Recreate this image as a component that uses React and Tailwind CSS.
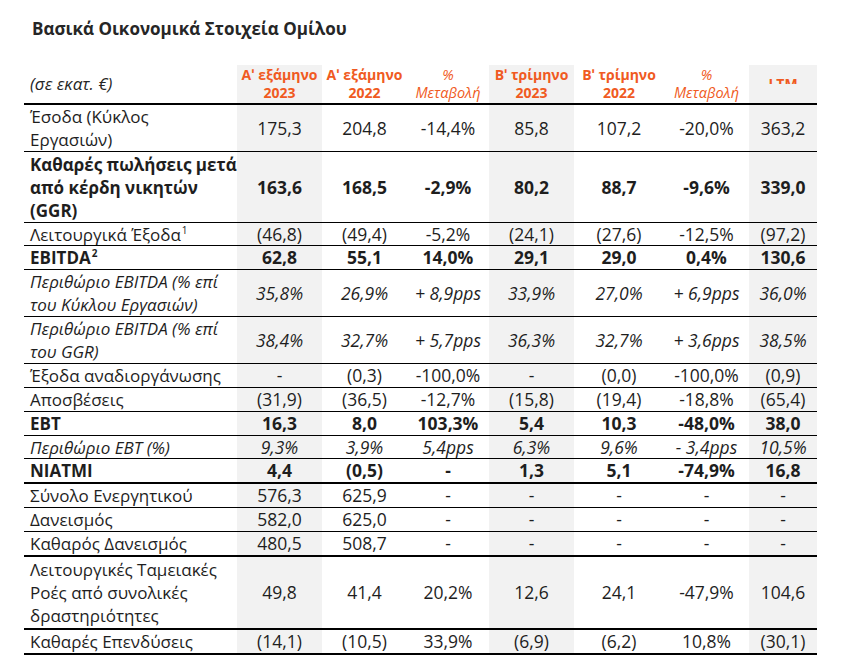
import React from 'react';

const cols = 'grid grid-cols-[213px_85px_85px_82px_85px_90px_85px_68px]';
const shaded = [1, 4, 7];

// h = row height in px, border included
const rows = [
  { h: 'h-[47px]', label: ['Έσοδα (Κύκλος', 'Εργασιών)'], vals: ['175,3', '204,8', '-14,4%', '85,8', '107,2', '-20,0%', '363,2'] },
  { h: 'h-[71px]', label: ['Καθαρές πωλήσεις μετά', 'από κέρδη νικητών', '(GGR)'], bold: true, vals: ['163,6', '168,5', '-2,9%', '80,2', '88,7', '-9,6%', '339,0'] },
  { h: 'h-[23px]', label: ['Λειτουργικά Έξοδα'], sup: '1', vals: ['(46,8)', '(49,4)', '-5,2%', '(24,1)', '(27,6)', '-12,5%', '(97,2)'] },
  { h: 'h-[24px]', label: ['EBITDA'], sup: '2', bold: true, vals: ['62,8', '55,1', '14,0%', '29,1', '29,0', '0,4%', '130,6'] },
  { h: 'h-[47px]', label: ['Περιθώριο EBITDA (% επί', 'του Κύκλου Εργασιών)'], italic: true, vals: ['35,8%', '26,9%', '+ 8,9pps', '33,9%', '27,0%', '+ 6,9pps', '36,0%'] },
  { h: 'h-[47px]', label: ['Περιθώριο EBITDA (% επί', 'του GGR)'], italic: true, vals: ['38,4%', '32,7%', '+ 5,7pps', '36,3%', '32,7%', '+ 3,6pps', '38,5%'] },
  { h: 'h-[24px]', label: ['Έξοδα αναδιοργάνωσης'], vals: ['-', '(0,3)', '-100,0%', '-', '(0,0)', '-100,0%', '(0,9)'] },
  { h: 'h-[24px]', label: ['Αποσβέσεις'], vals: ['(31,9)', '(36,5)', '-12,7%', '(15,8)', '(19,4)', '-18,8%', '(65,4)'] },
  { h: 'h-[24px]', label: ['EBT'], bold: true, vals: ['16,3', '8,0', '103,3%', '5,4', '10,3', '-48,0%', '38,0'] },
  { h: 'h-[23px]', label: ['Περιθώριο EBT (%)'], italic: true, vals: ['9,3%', '3,9%', '5,4pps', '6,3%', '9,6%', '- 3,4pps', '10,5%'] },
  { h: 'h-[25px]', label: ['NIATMI'], bold: true, thick: true, vals: ['4,4', '(0,5)', '-', '1,3', '5,1', '-74,9%', '16,8'] },
  { h: 'h-[24px]', label: ['Σύνολο Ενεργητικού'], vals: ['576,3', '625,9', '-', '-', '-', '-', '-'] },
  { h: 'h-[24px]', label: ['Δανεισμός'], vals: ['582,0', '625,0', '-', '-', '-', '-', '-'] },
  { h: 'h-[25px]', label: ['Καθαρός Δανεισμός'], thick: true, vals: ['480,5', '508,7', '-', '-', '-', '-', '-'] },
  { h: 'h-[73px]', label: ['Λειτουργικές Ταμειακές', 'Ροές από συνολικές', 'δραστηριότητες'], thick: true, vals: ['49,8', '41,4', '20,2%', '12,6', '24,1', '-47,9%', '104,6'] },
  { h: 'h-[25px]', label: ['Καθαρές Επενδύσεις'], thick: true, vals: ['(14,1)', '(10,5)', '33,9%', '(6,9)', '(6,2)', '10,8%', '(30,1)'] },
];

const headers = [
  ['Αʹ εξάμηνο', '2023'],
  ['Αʹ εξάμηνο', '2022'],
  null,
  ['Βʹ τρίμηνο', '2023'],
  ['Βʹ τρίμηνο', '2022'],
  null,
];

const Row = ({ row }) => {
  const weight = row.bold ? 'font-bold' : 'font-normal';
  const style = row.italic ? 'italic' : 'not-italic';
  return (
    <div className={`${cols} ${row.h} ${row.thick ? 'border-b-2' : 'border-b'} border-black overflow-hidden`}>
      <div className={`flex flex-col justify-center pl-[6px] leading-[23px] whitespace-nowrap ${weight} ${style}`}>
        {row.label.map((line, i) => (
          <div key={i}>
            {line}
            {row.sup && i === row.label.length - 1 && (
              <span className="inline-block align-top text-[10px] leading-[14px] ml-[1px]">{row.sup}</span>
            )}
          </div>
        ))}
      </div>
      {row.vals.map((v, i) => (
        <div
          key={i}
          className={`flex items-center justify-center whitespace-nowrap leading-[23px] text-[17.5px] ${weight} ${style} ${
            shaded.includes(i + 1) ? 'bg-[#f2f2f2]' : ''
          }`}
        >
          {v}
        </div>
      ))}
    </div>
  );
};

export default function App() {
  return (
    <div className="w-[854px] h-[672px] bg-white text-[#1e1e1e] font-['Open_Sans',sans-serif] text-[17px]">
      <div className="pt-[18px] pl-[32px]">
        <h1 className="font-['Open_Sans',sans-serif] font-bold text-[17px] leading-[22px] text-[#262626]">
          Βασικά Οικονομικά Στοιχεία Ομίλου
        </h1>
      </div>

      <div className="ml-[24px] mt-[25px] w-[793px]">
        {/* Header */}
        <div className={`${cols} h-[40px] border-b-2 border-black`}>
          <div className="flex items-center pl-[6px] italic text-[#262626]">(σε εκατ. €)</div>
          {headers.map((h, i) => (
            <div
              key={i}
              className={`flex flex-col items-center justify-center ${shaded.includes(i + 1) ? 'bg-[#f2f2f2]' : ''}`}
            >
              {h ? (
                <>
                  <span className="text-[14px] leading-[18px] font-bold text-[#f05a22]">{h[0]}</span>
                  <span className="text-[14px] leading-[18px] font-bold text-[#f05a22]">{h[1]}</span>
                </>
              ) : (
                <>
                  <span className="text-[14.5px] leading-[18px] italic text-[#f05a22]">%</span>
                  <span className="text-[14.5px] leading-[18px] italic text-[#f05a22]">Μεταβολή</span>
                </>
              )}
            </div>
          ))}
          <div className="bg-[#f2f2f2] flex justify-center">
            <div className="mt-[10px] h-[9px] overflow-hidden">
              <span className="block text-[14px] leading-[17px] font-bold text-[#f05a22]">LTM</span>
            </div>
          </div>
        </div>

        {rows.map((r, i) => (
          <Row key={i} row={r} />
        ))}
      </div>
    </div>
  );
}
